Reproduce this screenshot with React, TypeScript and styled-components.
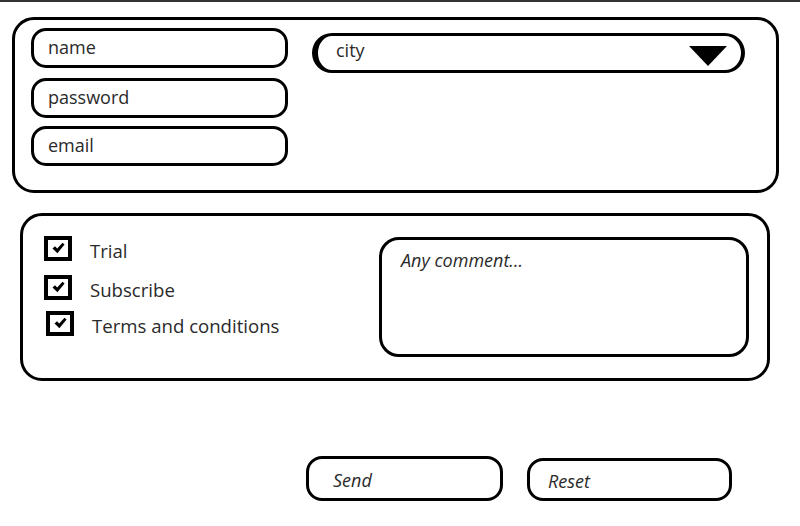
import React from "react";
import styled, { createGlobalStyle } from "styled-components";

const Global = createGlobalStyle`
  html, body { margin: 0; padding: 0; background: #fff; }
  body { font-family: "Open Sans", "Noto Sans", sans-serif; color: #2a2a2a; }
  * { box-sizing: border-box; }
`;

const Page = styled.div`
  width: 800px;
  height: 526px;
  border-top: 2px solid #333;
  padding-top: 15px;
  overflow: hidden;
`;

const Panel = styled.div<{ $left: number; $width: number; $height: number; $top?: number }>`
  margin-left: ${(p) => p.$left}px;
  margin-top: ${(p) => p.$top ?? 0}px;
  width: ${(p) => p.$width}px;
  height: ${(p) => p.$height}px;
  border: 3px solid #000;
  border-radius: 22px;
  display: flex;
`;

const FieldColumn = styled.div`
  display: flex;
  flex-direction: column;
  padding: 8px 0 0 16px;
`;

const Field = styled.div<{ $gap?: number }>`
  width: 257px;
  height: 40px;
  margin-top: ${(p) => p.$gap ?? 0}px;
  border: 3px solid #000;
  border-radius: 15px;
  display: flex;
  align-items: center;
  padding: 0 0 3px 14px;
  font-size: 18px;
  color: #2a2a2a;
`;

const Select = styled.div`
  margin: 13px 0 0 24px;
  width: 433px;
  height: 40px;
  border: 3px solid #000;
  border-left-width: 6px;
  border-right-width: 4px;
  border-radius: 20px;
  display: flex;
  align-items: center;
  justify-content: space-between;
  padding: 0 14px 6px 18px;
  font-size: 18px;
`;

const Arrow = styled.div`
  width: 0;
  height: 0;
  margin-top: 12px;
  border-left: 19px solid transparent;
  border-right: 19px solid transparent;
  border-top: 20px solid #000;
`;

const CheckColumn = styled.div`
  display: flex;
  flex-direction: column;
  padding: 19px 0 0 21px;
  width: 356px;
`;

const CheckRow = styled.div<{ $gap?: number; $shift?: number }>`
  display: flex;
  align-items: center;
  margin-top: ${(p) => p.$gap ?? 0}px;
  margin-left: ${(p) => p.$shift ?? 0}px;
  height: 26px;
`;

const Box = styled.div`
  width: 28px;
  height: 25px;
  border: 4px solid #000;
  display: flex;
  align-items: center;
  justify-content: center;
`;

const Label = styled.span`
  margin-left: 18px;
  padding-top: 5px;
  font-size: 18.6px;
  color: #2a2a2a;
`;

const Comment = styled.div`
  margin-top: 21px;
  width: 370px;
  height: 120px;
  border: 3px solid #000;
  border-radius: 20px;
  padding: 8px 0 0 19px;
  font-size: 18px;
  font-style: italic;
  color: #2a2a2a;
`;

const ButtonRow = styled.div`
  display: flex;
  margin: 75px 0 0 306px;
  gap: 24px;
`;

const Button = styled.div<{ $width: number; $top?: number }>`
  width: ${(p) => p.$width}px;
  height: ${(p) => 45 - (p.$top ?? 0)}px;
  margin-top: ${(p) => p.$top ?? 0}px;
  border: 3.5px solid #000;
  border-radius: 16px;
  display: flex;
  align-items: center;
  padding: 2px 0 0 ${(p) => (p.$top ? 18 : 24)}px;
  font-size: 18px;
  font-style: italic;
  color: #2a2a2a;
`;

const Check = () => (
  <svg width="13" height="12" viewBox="0 0 13 12">
    <path d="M0.5 6.5 L3 4.2 L5.2 6.6 L10.5 0.8 L12.6 2.6 L5.4 11.2 Z" fill="#000" />
  </svg>
);

export default function App() {
  return (
    <>
      <Global />
      <Page>
        <Panel $left={12} $width={767} $height={176}>
          <FieldColumn>
            <Field>name</Field>
            <Field $gap={10}>password</Field>
            <Field $gap={8}>email</Field>
          </FieldColumn>
          <Select>
            <span>city</span>
            <Arrow />
          </Select>
        </Panel>
        <Panel $left={20} $width={750} $height={168} $top={20}>
          <CheckColumn>
            <CheckRow>
              <Box><Check /></Box>
              <Label>Trial</Label>
            </CheckRow>
            <CheckRow $gap={13}>
              <Box><Check /></Box>
              <Label>Subscribe</Label>
            </CheckRow>
            <CheckRow $gap={10} $shift={2}>
              <Box><Check /></Box>
              <Label>Terms and conditions</Label>
            </CheckRow>
          </CheckColumn>
          <Comment>Any comment...</Comment>
        </Panel>
        <ButtonRow>
          <Button $width={197}>Send</Button>
          <Button $width={205} $top={2}>Reset</Button>
        </ButtonRow>
      </Page>
    </>
  );
}
